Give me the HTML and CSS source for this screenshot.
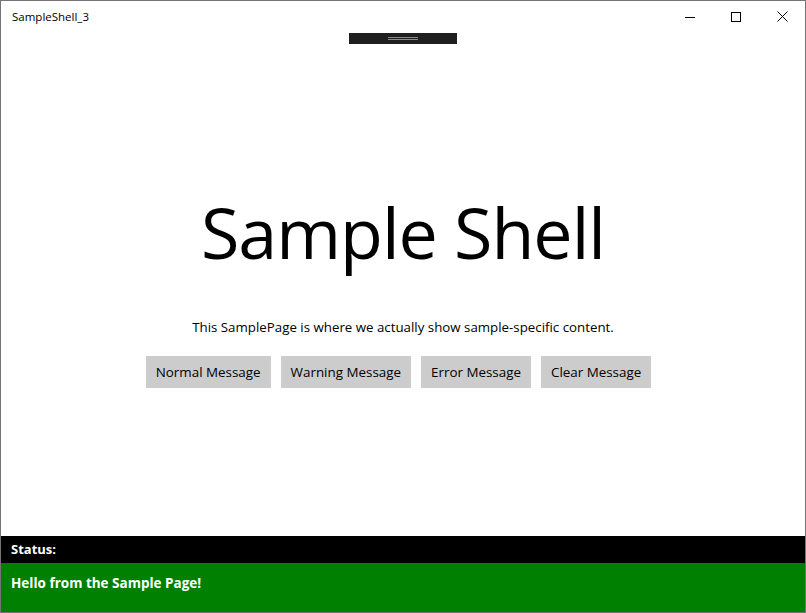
FILE: index.html
```html
<!DOCTYPE html>
<html>
<head>
<meta charset="utf-8">
<link rel="stylesheet" href="styles.css">
</head>
<body>
<div class="window">
  <div class="titlebar">
    <span class="app-title">SampleShell_3</span>
    <div class="controls">
      <span class="ctl"><svg width="10" height="10" viewBox="0 0 10 10"><path d="M0 5.5H10" stroke="#000" stroke-width="1"/></svg></span>
      <span class="ctl"><svg width="10" height="10" viewBox="0 0 10 10"><rect x="0.5" y="0.5" width="9" height="9" fill="none" stroke="#000" stroke-width="1"/></svg></span>
      <span class="ctl"><svg width="11" height="11" viewBox="0 0 11 11"><path d="M0.5 0.5L10.5 10.5M10.5 0.5L0.5 10.5" stroke="#000" stroke-width="1"/></svg></span>
    </div>
  </div>
  <div class="main">
    <div class="handle"><span class="grip"></span></div>
    <h1 class="heading">Sample Shell</h1>
    <p class="desc">This SamplePage is where we actually show sample-specific content.</p>
    <div class="buttons">
      <button class="btn">Normal Message</button>
      <button class="btn">Warning Message</button>
      <button class="btn">Error Message</button>
      <button class="btn">Clear Message</button>
    </div>
  </div>
  <div class="status-label">Status:</div>
  <div class="status-msg">Hello from the Sample Page!</div>
</div>
</body>
</html>
```
FILE: styles.css
```css
html, body {
  margin: 0;
  padding: 0;
  background: #fff;
}
body {
  font-family: "Open Sans", "Noto Sans", sans-serif;
  color: #000;
}
.window {
  width: 806px;
  height: 613px;
  box-sizing: border-box;
  border: 1px solid #747474;
  display: flex;
  flex-direction: column;
  overflow: hidden;
}
.titlebar {
  height: 31px;
  display: flex;
  align-items: center;
  justify-content: space-between;
  flex-shrink: 0;
}
.app-title {
  font-size: 11.5px;
  padding-left: 11px;
  padding-bottom: 1px;
}
.controls {
  display: flex;
  height: 31px;
}
.ctl {
  width: 46px;
  height: 31px;
  display: flex;
  align-items: center;
  justify-content: center;
}
.main {
  flex: 1;
  display: flex;
  flex-direction: column;
  align-items: center;
}
.handle {
  width: 108px;
  height: 11px;
  margin-top: 1px;
  background: #1f1f1f;
  display: flex;
  align-items: center;
  justify-content: center;
}
.grip {
  width: 30px;
  height: 1px;
  border-top: 1px solid #8a8a8a;
  border-bottom: 1px solid #8a8a8a;
}
.heading {
  font-weight: 400;
  font-size: 70px;
  line-height: 1;
  margin: 153px 0 0;
  letter-spacing: -1px;
}
.desc {
  font-size: 13.3px;
  margin: 51px 0 0;
  line-height: 18px;
}
.buttons {
  display: flex;
  gap: 10px;
  margin-top: 20px;
  padding-right: 9px;
}
.btn {
  font-family: inherit;
  font-size: 13.4px;
  height: 32px;
  padding: 0 10px;
  border: none;
  background: #cccccc;
  color: #000;
}
.status-label {
  background: #000;
  color: #fff;
  font-weight: 700;
  font-size: 13px;
  height: 27px;
  line-height: 27px;
  padding-left: 10px;
  flex-shrink: 0;
}
.status-msg {
  background: #008000;
  color: #fff;
  font-weight: 700;
  font-size: 13.5px;
  height: 49px;
  padding: 11px 10px 0;
  box-sizing: border-box;
  flex-shrink: 0;
}
```
